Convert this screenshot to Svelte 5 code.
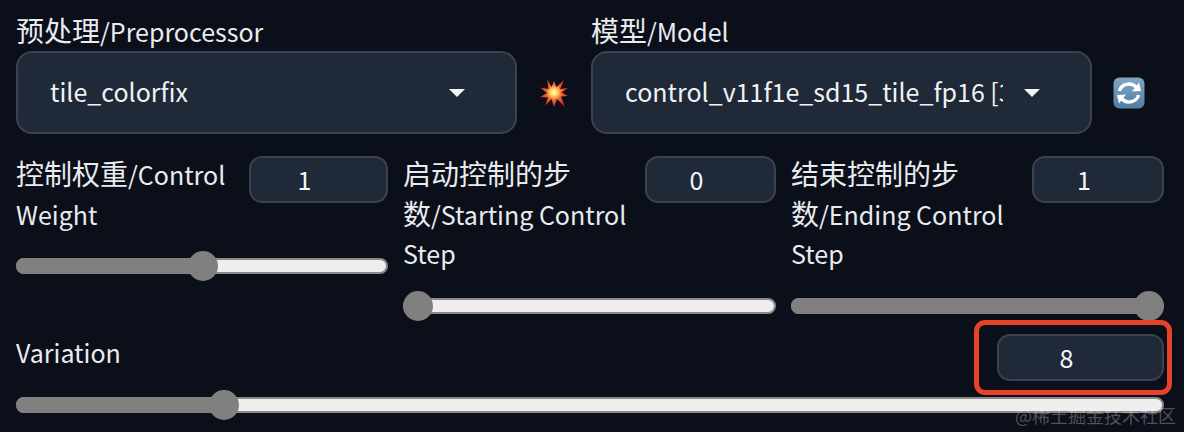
<script lang="ts">
    const controls = [
        { label: "控制权重/Control Weight", value: 1, pct: 50.3, inputWidth: 139 },
        { label: "启动控制的步数/Starting Control Step", value: 0, pct: 0, inputWidth: 131 },
        { label: "结束控制的步数/Ending Control Step", value: 1, pct: 100, inputWidth: 132 },
    ];

    // the Han characters sit larger than the latin text in the labels
    const parts = (text: string) => text.match(/[\u4e00-\u9fff]+|[^\u4e00-\u9fff]+/g) ?? [];
    const isHan = (text: string) => /[\u4e00-\u9fff]/.test(text);
</script>

{#snippet labelText(text: string)}
    {#each parts(text) as part}<span class:han={isHan(part)}>{part}</span>{/each}
{/snippet}

{#snippet slider(pct: number)}
    <div class="slider">
        <div class="fill" style="width: {pct}%"></div>
        <div class="thumb-rail">
            <div class="thumb" style="left: {pct}%"></div>
        </div>
    </div>
{/snippet}

<main class="panel">
    <section class="selects">
        <div class="field">
            <span class="field-label">{@render labelText("预处理/Preprocessor")}</span>
            <div class="select">
                <span class="select-text">tile_colorfix</span>
                <span class="caret"></span>
            </div>
        </div>
        <button class="icon-btn" aria-label="run preprocessor">
            <svg width="30" height="30" viewBox="0 0 30 30">
                <defs>
                    <radialGradient id="burst" cx="50%" cy="48%" r="55%">
                        <stop offset="0%" stop-color="#fffbe0" />
                        <stop offset="22%" stop-color="#ffd86a" />
                        <stop offset="48%" stop-color="#f76a2c" />
                        <stop offset="100%" stop-color="#c8201c" />
                    </radialGradient>
                </defs>
                <polygon
                    fill="url(#burst)"
                    points="8,1 12.5,9 15,3 17.5,9 25,2 21,11 29,10 22.5,14.5 29,18 22,18.5 26,29 18,21 15,29 12.5,21 6,28 9,19.5 1,19 8,15 1,9.5 9.5,11"
                />
            </svg>
        </button>
        <div class="field">
            <span class="field-label">{@render labelText("模型/Model")}</span>
            <div class="select">
                <span class="select-text">control_v11f1e_sd15_tile_fp16 [3b860298]</span>
                <span class="caret"></span>
            </div>
        </div>
        <button class="icon-btn" aria-label="refresh models">
            <svg width="32" height="32" viewBox="0 0 32 32">
                <defs>
                    <linearGradient id="tile" x1="0" y1="0" x2="0" y2="1">
                        <stop offset="0%" stop-color="#82a6c2" />
                        <stop offset="100%" stop-color="#4f7ea6" />
                    </linearGradient>
                </defs>
                <rect x="0.5" y="0.5" width="31" height="31" rx="6" fill="url(#tile)" />
                <path d="M6.5 14 A9.5 8.5 0 0 1 23 10" fill="none" stroke="#fff" stroke-width="3.4" />
                <path d="M25.5 18 A9.5 8.5 0 0 1 9 22" fill="none" stroke="#fff" stroke-width="3.4" />
                <polygon points="19,14.5 28,14 26,5.5" fill="#fff" />
                <polygon points="13,17.5 4,18 6,26.5" fill="#fff" />
            </svg>
        </button>
    </section>

    <section class="controls">
        {#each controls as control}
            <div class="control">
                <div class="control-head">
                    <span class="control-label">{@render labelText(control.label)}</span>
                    <div class="number" style="width: {control.inputWidth}px">{control.value}</div>
                </div>
                {@render slider(control.pct)}
            </div>
        {/each}
    </section>

    <section class="variation">
        <div class="control-head">
            <span class="control-label">Variation</span>
            <div class="number wide">8</div>
        </div>
        {@render slider(17.3)}
    </section>

    <div class="highlight"></div>
    <span class="watermark">@稀土掘金技术社区</span>
</main>

<style>
    :global(body) {
        margin: 0;
        background: #0b0f19;
    }

    .panel {
        position: relative;
        box-sizing: border-box;
        width: 1184px;
        height: 432px;
        padding: 14px 20px 0 16px;
        overflow: hidden;
        background: #0b0f19;
        color: #e9ebef;
        font-family: "Noto Sans CJK SC", "Noto Sans", sans-serif;
        font-size: 25px;
    }

    .han {
        font-size: 28px;
        line-height: 1;
    }

    .selects {
        display: flex;
        align-items: flex-end;
    }

    .field {
        display: flex;
        flex-direction: column;
        width: 501px;
        flex: none;
    }

    .field-label {
        height: 37px;
        line-height: 34px;
    }

    .select {
        display: flex;
        align-items: center;
        box-sizing: border-box;
        height: 83px;
        padding: 0 50px 3px 32px;
        gap: 21px;
        background: #1f2937;
        border: 2px solid #3b4250;
        border-radius: 16px;
    }

    .select-text {
        flex: 1;
        min-width: 0;
        overflow: hidden;
        white-space: nowrap;
        color: #f0f2f5;
    }

    .caret {
        flex: none;
        width: 0;
        height: 0;
        margin-top: 3px;
        border-left: 8px solid transparent;
        border-right: 8px solid transparent;
        border-top: 8px solid #f3f4f6;
    }

    .icon-btn {
        display: flex;
        align-items: center;
        justify-content: center;
        width: 74px;
        height: 83px;
        padding: 0;
        flex: none;
        background: none;
        border: none;
    }

    .controls {
        display: grid;
        grid-template-columns: 372px 373px 373px;
        column-gap: 15px;
        margin-top: 22px;
    }

    .control-head {
        display: flex;
        justify-content: space-between;
        gap: 16px;
    }

    .control-label {
        flex: 1;
        min-width: 0;
        margin-top: -1px;
        line-height: 39.5px;
    }

    .number {
        flex: none;
        box-sizing: border-box;
        height: 47px;
        padding-right: 28px;
        line-height: 42px;
        text-align: center;
        color: #f6f7f9;
        background: #1f2937;
        border: 2px solid #3b4250;
        border-radius: 13px;
    }

    .number.wide {
        width: 167px;
    }

    .slider {
        position: relative;
        box-sizing: border-box;
        height: 16px;
        margin-top: 24px;
        background: #eeeeee;
        border: 2px solid #8a8a8a;
        border-radius: 8px;
    }

    .variation .slider {
        margin-top: 16px;
    }

    .fill {
        position: absolute;
        top: -2px;
        bottom: -2px;
        left: -2px;
        background: #808080;
        border-radius: 8px 0 0 8px;
    }

    .thumb-rail {
        position: absolute;
        top: 0;
        bottom: 0;
        left: 13px;
        right: 13px;
    }

    .thumb {
        position: absolute;
        top: 50%;
        width: 30px;
        height: 30px;
        border-radius: 50%;
        background: #808080;
        transform: translate(-50%, -50%);
    }

    .variation {
        margin-top: 20px;
    }

    .highlight {
        position: absolute;
        left: 974px;
        top: 320px;
        width: 198px;
        height: 75px;
        box-sizing: border-box;
        border: 5px solid #e8432a;
        border-radius: 11px;
    }

    .watermark {
        position: absolute;
        right: 8px;
        top: 403px;
        font-size: 18px;
        line-height: 24px;
        color: rgba(255, 255, 255, 0.28);
    }
</style>
